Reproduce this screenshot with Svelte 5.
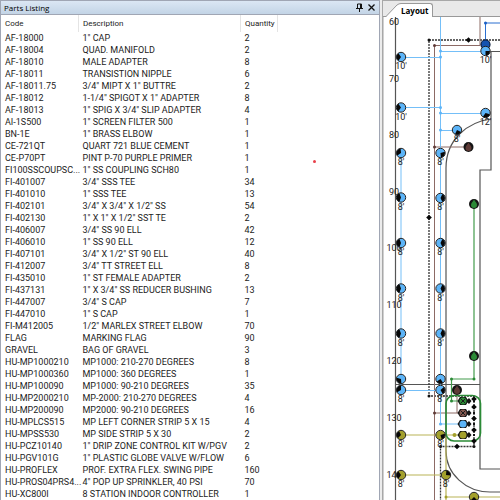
<script>
  const parts = [
    ['AF-18000', '1" CAP', 2],
    ['AF-18004', 'QUAD. MANIFOLD', 2],
    ['AF-18010', 'MALE ADAPTER', 8],
    ['AF-18011', 'TRANSISTION NIPPLE', 6],
    ['AF-18011.75', '3/4" MIPT X 1" BUTTRE', 2],
    ['AF-18012', '1-1/4" SPIGOT X 1" ADAPTER', 8],
    ['AF-18013', '1" SPIG X 3/4" SLIP ADAPTER', 4],
    ['AI-1S500', '1" SCREEN FILTER 500', 1],
    ['BN-1E', '1" BRASS ELBOW', 1],
    ['CE-721QT', 'QUART 721 BLUE CEMENT', 1],
    ['CE-P70PT', 'PINT P-70 PURPLE PRIMER', 1],
    ['FI100SSCOUPSC...', '1" SS COUPLING SCH80', 1],
    ['FI-401007', '3/4" SSS TEE', 34],
    ['FI-401010', '1" SSS TEE', 13],
    ['FI-402101', '3/4" X 3/4" X 1/2" SS', 54],
    ['FI-402130', '1" X 1" X 1/2" SST TE', 2],
    ['FI-406007', '3/4" SS 90 ELL', 42],
    ['FI-406010', '1" SS 90 ELL', 12],
    ['FI-407101', '3/4" X 1/2" ST 90 ELL', 40],
    ['FI-412007', '3/4" TT STREET ELL', 8],
    ['FI-435010', '1" ST FEMALE ADAPTER', 2],
    ['FI-437131', '1" X 3/4" SS REDUCER BUSHING', 13],
    ['FI-447007', '3/4" S CAP', 7],
    ['FI-447010', '1" S CAP', 1],
    ['FI-M412005', '1/2" MARLEX STREET ELBOW', 70],
    ['FLAG', 'MARKING FLAG', 90],
    ['GRAVEL', 'BAG OF GRAVEL', 3],
    ['HU-MP1000210', 'MP1000: 210-270 DEGREES', 8],
    ['HU-MP1000360', 'MP1000: 360 DEGREES', 1],
    ['HU-MP100090', 'MP1000: 90-210 DEGREES', 35],
    ['HU-MP2000210', 'MP-2000: 210-270 DEGREES', 4],
    ['HU-MP200090', 'MP2000: 90-210 DEGREES', 16],
    ['HU-MPLCS515', 'MP LEFT CORNER STRIP 5 X 15', 4],
    ['HU-MPSS530', 'MP SIDE STRIP 5 X 30', 2],
    ['HU-PCZ10140', '1" DRIP ZONE CONTROL KIT W/PGV', 2],
    ['HU-PGV101G', '1" PLASTIC GLOBE VALVE W/FLOW', 6],
    ['HU-PROFLEX', 'PROF. EXTRA FLEX. SWING PIPE', 160],
    ['HU-PROS04PRS4...', '4" POP UP SPRINKLER, 40 PSI', 70],
    ['HU-XC800I', '8 STATION INDOOR CONTROLLER', 1]
  ];

  const blue = '#5cb4f8';
  const olive = '#a3a02c';

  // x, y, fill, direction and spread of the dark sector in degrees, label
  const heads = [
    [401, 57, blue, 180, 110, "10'"],
    [401, 107.5, blue, 180, 110, "10'"],
    [401, 153, blue, 205, 120, "8'"],
    [401, 197.5, blue, 180, 140, "8'"],
    [401, 243, blue, 180, 140, "8'"],
    [401, 288.5, blue, 180, 140, "8'"],
    [401, 333.5, blue, 180, 140, "8'"],
    [401, 379, blue, 140, 110, ''],
    [401, 390, blue, 210, 120, "8'"],
    [440.5, 153, blue, 35, 100, "8'"],
    [440.5, 198, blue, 0, 130, "8'"],
    [440.5, 243, blue, 0, 130, "8'"],
    [440.5, 288.5, blue, 0, 130, "8'"],
    [440.5, 333.5, blue, 0, 130, "8'"],
    [440.5, 379, blue, 100, 90, ''],
    [440.5, 390, blue, 10, 100, "8'"],
    [485.5, 51, blue, 45, 90, "10'"],
    [485.5, 113, blue, 70, 110, "12'"],
    [457, 130, blue, 70, 90, "8'"],
    [401, 435, olive, 190, 110, "8'"],
    [440.5, 435, olive, 30, 90, "8'"],
    [401, 475, olive, 180, 110, "8'"],
    [446, 475, olive, -40, 90, "8'"],
    [474, 497, olive, 90, 90, '']
  ];

  function sector(direction, spread) {
    const at = (degrees) => {
      const a = (degrees * Math.PI) / 180;
      return `${(4.5 * Math.cos(a)).toFixed(2)} ${(4.5 * Math.sin(a)).toFixed(2)}`;
    };
    return `M0 0L${at(direction - spread / 2)}A4.5 4.5 0 0 1 ${at(direction + spread / 2)}z`;
  }

  const drops = [
    [468.5, 147, '#5e3a36'],
    [457, 390, '#5e3a36'],
    [474, 204, '#2b8a36'],
    [474, 356, '#2b8a36']
  ];

  const valves = [
    [401, '#2b8a36', true],
    [413, '#84584f', true],
    [424, blue, false],
    [435, olive, false]
  ];

  const ruler = [
    [22, '60'], [79, '70'], [135, '80'], [192, '90'], [248, '100'],
    [305, '110'], [361, '120'], [418, '130'], [475, '140']
  ];

  const diamonds = [
    [468.5, 40], [429, 217.5], [474, 399], [474, 407], [474, 418.5],
    [474, 430], [474, 441], [457, 446.5]
  ];
  const nodes = [
    [429, 40, '#111'], [429, 396, '#111'], [440.5, 446.5, '#111'], [474, 446.5, '#111'],
    [434.5, 45.5, '#5e3a36'], [434.5, 147, '#5e3a36'], [434.5, 413, '#5e3a36'],
    [440.5, 51, blue], [440.5, 57, blue], [440.5, 107.5, blue],
    [440.5, 113, blue], [440.5, 130, blue], [440.5, 424, blue],
    [485.5, 23, '#1b5fc4'], [474, 379, '#2b8a36'], [451.5, 379, '#2b8a36'],
    [451.5, 401, '#2b8a36'], [446, 497, olive]
  ];
</script>

<main class="app">
  <section class="parts">
    <header class="title">
      <h1>Parts Listing</h1>
      <button aria-label="Pin panel">
        <svg width="7" height="9" viewBox="0 0 7 9"><path d="M1.5 5V1h4v4M4.5 1v4M0 5.5h7M3.5 5.5V9" fill="none" stroke="#111" /></svg>
      </button>
      <button aria-label="Close panel">
        <svg width="7" height="7" viewBox="0 0 7 7"><path d="M.5.5l6 6M6.5.5l-6 6" stroke="#111" stroke-width="1.3" /></svg>
      </button>
    </header>
    <div class="list">
      <table>
        <thead>
          <tr><th class="code">Code</th><th class="desc">Description</th><th class="qty">Quantity</th><th></th></tr>
        </thead>
        <tbody>
          {#each parts as [code, description, quantity]}
            <tr><td>{code}</td><td>{description}</td><td>{quantity}</td><td></td></tr>
          {/each}
        </tbody>
      </table>
      <span class="marker"></span>
    </div>
  </section>

  <section class="drawing">
    <nav class="tabs">
      <svg class="slant" width="15" height="14" viewBox="0 0 15 14"><path d="M0 14L11 2Q13 .5 15 .5V14z" fill="#fff" /><path d="M0 13.5L11 2Q13 .5 15 .5" fill="none" stroke="#999" /></svg>
      <button class="tab">Layout</button>
    </nav>
    <svg class="canvas" role="img" aria-label="Irrigation layout">
      <g transform="translate(-384 -17)" fill="none">
        <g stroke="#555" stroke-width="1.2">
          <path d="M395.5 17V500M395 384.5H480" />
          <path d="M500 51.5H491V170H480V469H500" />
          <path d="M491 119C468 122 446 139 446 168V451C446 474 466 492 490 492H500" />
        </g>
        <g stroke="#333" stroke-width="1.3" stroke-dasharray="2 1">
          <path d="M500 40H429V396H474V446.5H440.5V500" />
        </g>
        <path d="M480 17V45.5H434.5V500M434.5 147H464M457 395V413M434.5 413H460" stroke="#8c6a65" />
        <path d="M440.5 17V424H460M401 153V390M401 57.5H440.5M401 107.5H440.5M440.5 51.5H481M440.5 113.5H481M440.5 130.5H453M405 390.5H440" stroke="#74bff8" />
        <path d="M500 23H485.5V44" stroke="#2b6fd0" />
        <path d="M474 204V379H451.5V401H460" stroke="#439c4c" stroke-width="1.2" />
        <path d="M401 435H460M401 475H446M446 435V500M446 497H500" stroke="#b9b457" stroke-width="1.2" />
        <rect x="446" y="395.5" width="34.5" height="45.5" rx="8" stroke="#2b8a36" stroke-width="1.6" />

        <g class="labels">
          {#each ruler as [y, label]}
            <text x="394" y={y + 3}>{label}</text>
          {/each}
        </g>

        {#each nodes as [x, y, fill]}
          <circle cx={x} cy={y} r="1.5" {fill} />
        {/each}
        {#each diamonds as [x, y]}
          <path d="M0-2.8L2.8 0L0 2.8L-2.8 0z" transform={`translate(${x} ${y})`} fill="#080808" />
        {/each}
        <circle cx="454.5" cy="435" r="2" fill={olive} />

        {#each valves as [y, fill, crossed]}
          <g transform={`translate(463 ${y})`}>
            <path d="M-5.5 0L-3-4H3L4.5-1.5L6-3L8.5 0L6 3L4.5 1.5L3 4H-3z" fill="#151515" />
            <circle r="3.5" {fill} />
            {#if crossed}
              <path d="M-2.4-2.4L2.4 2.4M2.4-2.4L-2.4 2.4" stroke="#1c1c1c" />
            {/if}
          </g>
          <rect x="473" y={y - 1} width="2" height="2" fill="#111" />
        {/each}

        <circle cx="485.5" cy="44.5" r="4.5" fill="#1553b0" stroke="#0a1c3c" stroke-width="1.2" />
        {#each heads as [x, y, fill, direction, spread]}
          <g transform={`translate(${x} ${y})`}>
            <circle r="4.5" {fill} />
            <path d={sector(direction, spread)} fill="#080808" />
            <circle r="4.7" stroke="#222" />
          </g>
        {/each}
        {#each drops as [x, y, fill]}
          <g transform={`translate(${x} ${y})`}>
            <circle r="5" fill="#141414" />
            <path d="M0-4.5C1-2.5 3-1 3 1A3 3 0 0 1-3 1C-3-1-1-2.5 0-4.5z" {fill} />
          </g>
        {/each}

        <g class="labels">
          {#each heads as [x, y, , , , label]}
            <text {x} y={y + 12}>{label}</text>
          {/each}
        </g>
      </g>
    </svg>
  </section>
</main>

<style>
  :global(body) {
    margin: 0;
  }
  .app {
    display: flex;
    height: 100vh;
    overflow: hidden;
    background: #ececec;
    font-family: Roboto, 'Liberation Sans', sans-serif;
    font-size: 9px;
    color: #1c1c1c;
  }
  .parts {
    display: flex;
    flex-direction: column;
    flex: 0 0 76%;
    min-width: 0;
    box-sizing: border-box;
    border: 1px solid #a0a6b4;
    border-bottom: 0;
  }
  .title {
    display: flex;
    align-items: center;
    gap: 5px;
    height: 13px;
    padding: 0 4px 0 3px;
    background: linear-gradient(#dbe7f4, #c3d4e6);
    border-bottom: 1px solid #a0a6b4;
  }
  h1 {
    flex: 1;
    margin: 0;
    font: 8px 'Open Sans', sans-serif;
    color: #000;
  }
  button {
    display: flex;
    padding: 0;
    border: 0;
    background: none;
    color: inherit;
  }
  .list {
    position: relative;
    flex: 1;
    min-height: 0;
    overflow: hidden;
    background: #fff;
  }
  table {
    width: 100%;
    table-layout: fixed;
    border-collapse: collapse;
    line-height: 12px;
  }
  th,
  td {
    padding: 0 0 0 4px;
    text-align: left;
    font-weight: 400;
    white-space: nowrap;
  }
  th {
    height: 17px;
    border-right: 1px solid #e4e4e4;
    font-size: 8px;
  }
  th:last-child {
    border: 0;
  }
  .code {
    width: 73px;
  }
  .desc {
    width: 157px;
  }
  .qty {
    width: 32px;
  }
  .marker {
    position: absolute;
    left: 312px;
    top: 145px;
    width: 3px;
    height: 3px;
    border-radius: 50%;
    background: #e8404a;
  }
  .drawing {
    display: flex;
    flex-direction: column;
    flex: 1;
    min-width: 0;
    margin-left: 2px;
    border-left: 1px solid #a8a8a8;
  }
  .tabs {
    display: flex;
    align-items: flex-end;
    height: 17px;
    padding-left: 3px;
    border-top: 1px solid #a8a8a8;
    box-sizing: border-box;
    background: linear-gradient(#999, #999) 0 100% / 100% 1px no-repeat #e9e9e9;
  }
  .tab {
    height: 14px;
    padding: 0 3px 0 0;
    align-items: center;
    border: 1px solid #999;
    border-width: 1px 1px 0 0;
    border-radius: 0 3px 0 0;
    background: #fff;
    box-sizing: border-box;
    font: bold 8px 'Open Sans', sans-serif;
    color: #000;
  }
  .canvas {
    flex: 1;
    width: 100%;
    min-height: 0;
    box-sizing: border-box;
    background: #fff;
    border-left: 1px solid #d0d0d0;
  }
  .labels {
    fill: #222;
    font: 9px Roboto, sans-serif;
    text-anchor: middle;
  }
</style>
